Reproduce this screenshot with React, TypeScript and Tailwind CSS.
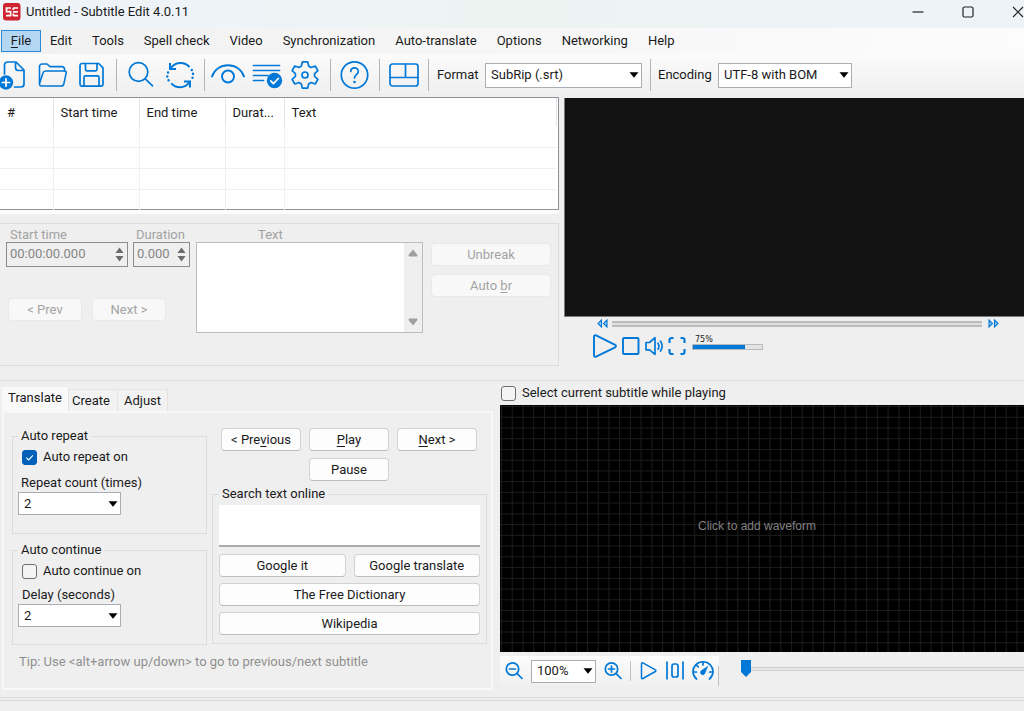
import React from "react";

const blue = "#0078d7";

function Icon({ w, h, sw = 1.7, children }: { w: number; h: number; sw?: number; children: React.ReactNode }) {
  return (
    <svg
      width={w}
      height={h}
      viewBox={`0 0 ${w} ${h}`}
      fill="none"
      stroke={blue}
      strokeWidth={sw}
      strokeLinecap="round"
      strokeLinejoin="round"
      className="block shrink-0"
      aria-hidden="true"
    >
      {children}
    </svg>
  );
}

const NewIcon = () => (
  <Icon w={28} h={32}>
    <path d="M4.500 15V6a3 3 0 0 1 3-3H16l8 8v14a3 3 0 0 1-3 3h-6.500M15.500 3v5.500a3 3 0 0 0 3 3H24" />
    <circle cx="6" cy="23.500" r="7.200" fill={blue} stroke="none" />
    <path d="M6 19.800v7.400M2.300 23.500h7.400" stroke="#fff" />
  </Icon>
);

const FolderIcon = () => (
  <Icon w={30} h={32} sw={1.6}>
    <path d="M1.500 24V7.500A2.500 2.500 0 0 1 4 5h5l3 2.600h12a2.500 2.500 0 0 1 2.500 2.500V12" />
    <path d="M7.500 12h19.200a1.500 1.500 0 0 1 1.500 1.900l-2.300 10.800a3 3 0 0 1-2.900 2.300H3.500a2 2 0 0 1-2-2.500L5 14a2.600 2.600 0 0 1 2.500-2Z" />
  </Icon>
);

const SaveIcon = () => (
  <Icon w={28} h={32}>
    <path d="M4.200 4.500h16.500l4.300 4.300V25a2.200 2.200 0 0 1-2.200 2.200H4.200A2.200 2.200 0 0 1 2 25V6.700A2.200 2.200 0 0 1 4.200 4.500Z" />
    <path d="M7.500 4.500v6a1.300 1.300 0 0 0 1.300 1.300h8.900a1.300 1.300 0 0 0 1.300-1.300v-6M6 27v-8.700a1.500 1.500 0 0 1 1.500-1.500h12a1.500 1.500 0 0 1 1.500 1.500V27" />
  </Icon>
);

const SearchIcon = () => (
  <Icon w={28} h={32}>
    <circle cx="11.500" cy="13" r="9.300" />
    <path d="m18.300 19.800 7.200 7" />
  </Icon>
);

const ReplaceIcon = () => (
  <Icon w={30} h={32} sw={2}>
    <path d="M5.500 9.500C8 6 11.500 4 15.500 4c4 0 7 1.700 9 4M5 4v6h6" strokeLinecap="butt" strokeLinejoin="miter" />
    <path d="M24.500 23c-2 3.200-5.500 5.200-9.500 5.200-3.600 0-6.600-1.500-8.700-3.900M25 28.500v-6h-6" strokeLinecap="butt" strokeLinejoin="miter" />
    <path d="M3 13.500v.1M2.300 17.500v.1M3.600 21.300v.1M26.800 11v.1M28 14.800v.1M27.500 18.700v.1" strokeWidth="2.400" />
  </Icon>
);

const EyeIcon = () => (
  <Icon w={34} h={32} sw={1.9}>
    <path d="M1 17.500C3.500 10.500 9.700 6.300 17 6.300S30.500 10.500 33 17.500" />
    <circle cx="17" cy="17.500" r="6" />
  </Icon>
);

const SpellIcon = () => (
  <Icon w={32} h={32}>
    <path d="M2.500 6.500h26M2.500 11.500h26M2.500 16.500H17M2.500 21.500h10" />
    <circle cx="23.500" cy="21.500" r="7.700" fill={blue} stroke="none" />
    <path d="m19.700 21.800 2.700 2.800 5-5.300" stroke="#fff" />
  </Icon>
);

const GearIcon = () => (
  <Icon w={32} h={32}>
    <path d="M13.300 2.800h5.400l.9 4.300 2.400 1.400 4.200-1.500 2.700 4.700-3.300 2.900v2.800l3.300 2.900-2.700 4.700-4.200-1.500-2.400 1.400-.9 4.300h-5.400l-.9-4.300-2.400-1.400L5.800 25l-2.700-4.700 3.300-2.900v-2.800l-3.300-2.900L5.800 7 10 8.500l2.400-1.400Z" />
    <circle cx="16" cy="16" r="3" />
  </Icon>
);

const HelpIcon = () => (
  <Icon w={30} h={32}>
    <circle cx="14.500" cy="16" r="13.200" />
    <path d="M10.800 12.500c0-2.300 1.600-3.700 3.700-3.700s3.800 1.500 3.800 3.600c0 3.200-3.800 3.300-3.800 6.600" />
    <circle cx="14.500" cy="23" r="1.300" fill={blue} stroke="none" />
  </Icon>
);

const LayoutIcon = () => (
  <Icon w={30} h={32}>
    <rect x="1" y="5" width="28" height="22" rx="2.500" />
    <path d="M1 18.500h28M16.500 5v13.500" />
  </Icon>
);

function ToolButton({ label, children }: { label: string; children: React.ReactNode }) {
  return (
    <button type="button" aria-label={label} title={label} className="block shrink-0">
      {children}
    </button>
  );
}

function Separator() {
  return <div className="h-8 w-px shrink-0 bg-[#b4b4b4]" />;
}

function Combo({ id, value, className }: { id: string; value: string; className: string }) {
  return (
    <div className={`relative shrink-0 ${className}`}>
      <select
        id={id}
        aria-label={id}
        defaultValue={value}
        className="block size-full appearance-none rounded-none border border-[#acacb4] bg-white pl-[5px] text-[#1a1a1a]"
      >
        <option>{value}</option>
      </select>
      <svg width="10" height="6" viewBox="0 0 10 6" className="pointer-events-none absolute top-1/2 right-[3px] -translate-y-1/2">
        <path d="M0.500 0.300h9L5 5.700Z" fill="#000" />
      </svg>
    </div>
  );
}

function Btn({ children, disabled = false, className = "" }: { children: React.ReactNode; disabled?: boolean; className?: string }) {
  return (
    <button
      type="button"
      disabled={disabled}
      className={`flex h-[23px] items-center justify-center rounded-[4px] border border-[#d2d2d2] border-b-[#bdbdbd] bg-[#fdfdfd] whitespace-nowrap disabled:border-[#e9e9e9] disabled:bg-[#f8f8f8] disabled:text-[#a3a3a3] ${className}`}
    >
      {children}
    </button>
  );
}

function Check({ id, label, checked = false }: { id: string; label: string; checked?: boolean }) {
  return (
    <label htmlFor={id} className="flex items-center gap-1.5 whitespace-nowrap">
      <span className="relative block size-[15px]">
        <input
          id={id}
          type="checkbox"
          defaultChecked={checked}
          className="peer block size-[15px] appearance-none rounded-[3px] border border-[#6e6e6e] bg-[#f4f4f4] checked:border-[#005fb8] checked:bg-[#005fb8]"
        />
        <svg viewBox="0 0 14 14" className="pointer-events-none absolute inset-0 hidden peer-checked:block" fill="none" stroke="#fff" strokeWidth="1">
          <path d="m4 7.200 2.200 2.100L10.200 5" />
        </svg>
      </span>
      {label}
    </label>
  );
}

function TimeBox({ id, value }: { id: string; value: string }) {
  return (
    <div className="flex h-[25px] w-full items-center justify-between border border-[#8c8c8c] pr-[3px] pl-[3px]">
      <input id={id} disabled defaultValue={value} className="w-0 min-w-0 flex-1 bg-transparent pb-0.5 text-[#858585]" />
      <svg width="9" height="15" viewBox="0 0 9 15" fill="#6b6b6b" className="shrink-0">
        <path d="M4.500 0.500 8.500 6h-8ZM4.500 14.500 8.500 9h-8Z" />
      </svg>
    </div>
  );
}

const menus = ["Edit", "Tools", "Spell check", "Video", "Synchronization", "Auto-translate", "Options", "Networking", "Help"];

function TitleBar() {
  return (
    <header className="flex h-7 shrink-0 items-center bg-linear-to-r from-[#eff3fa] via-[#ecf4f2] to-[#eef3f8] pb-1 pl-[3px]">
      <svg width="18" height="18" viewBox="0 0 18 18" className="shrink-0">
        <rect width="17.500" height="17.500" rx="3" fill="#cf2530" />
        <path d="M8 5H3.500v3.700H7.600v4H3M15 5h-4.800M10 8.800h4.800M15 12.700h-4.800M10.300 5v2M10.300 10.500v2.200" fill="none" stroke="#fff" strokeWidth="1.700" />
      </svg>
      <h1 className="ml-1 flex-1 pl-px text-[#1a1a1a]">Untitled - Subtitle Edit 4.0.11</h1>
      <div className="flex items-center gap-[38px]">
        {[
          ["Minimize", "M0.500 6h11"],
          ["Maximize", "M2.500 1h7a1.500 1.500 0 0 1 1.500 1.500v7a1.500 1.500 0 0 1-1.500 1.500h-7A1.500 1.500 0 0 1 1 9.500v-7A1.500 1.500 0 0 1 2.500 1Z"],
          ["Close", "m1 1 10 10M11 1 1 11"],
        ].map(([name, d]) => (
          <button key={name} type="button" aria-label={name}>
            <svg width="12" height="12" viewBox="0 0 12 12" fill="none" stroke="#222" strokeWidth="1.200">
              <path d={d} />
            </svg>
          </button>
        ))}
      </div>
    </header>
  );
}

function MenuBar() {
  return (
    <nav className="flex h-[26px] shrink-0 items-center bg-linear-to-r from-[#f1f1f1] to-[#fcfcfc] pl-px">
      <button type="button" className="h-[22px] w-10 border border-[#2a8ad8] bg-[#b3d7f3]">
        <span className="underline underline-offset-2">F</span>ile
      </button>
      <div className="flex items-center gap-5 pl-[9px]">
        {menus.map((m) => (
          <button key={m} type="button" className="whitespace-nowrap">
            {m}
          </button>
        ))}
      </div>
    </nav>
  );
}

function ToolBar() {
  return (
    <div className="flex h-[43px] shrink-0 items-center gap-[9px] bg-linear-to-b from-[#fbfbfb] to-[#efefef] pb-px">
      <div className="flex items-center gap-2.5">
        <ToolButton label="New"><NewIcon /></ToolButton>
        <ToolButton label="Open"><FolderIcon /></ToolButton>
        <ToolButton label="Save"><SaveIcon /></ToolButton>
        <Separator />
        <ToolButton label="Find"><SearchIcon /></ToolButton>
        <ToolButton label="Replace"><ReplaceIcon /></ToolButton>
      </div>
      <div className="flex items-center gap-1.5">
        <Separator />
        <ToolButton label="Visual sync"><EyeIcon /></ToolButton>
        <ToolButton label="Spell check"><SpellIcon /></ToolButton>
        <ToolButton label="Settings"><GearIcon /></ToolButton>
      </div>
      <Separator />
      <ToolButton label="Help"><HelpIcon /></ToolButton>
      <Separator />
      <ToolButton label="Choose layout"><LayoutIcon /></ToolButton>
      <div className="flex items-center gap-2">
        <Separator />
        <label htmlFor="Format" className="w-10">Format</label>
        <Combo id="Format" value="SubRip (.srt)" className="h-[25px] w-[157px]" />
      </div>
      <div className="-ml-px flex items-center gap-[7px]">
        <Separator />
        <label htmlFor="Encoding" className="w-[53px]">Encoding</label>
        <Combo id="Encoding" value="UTF-8 with BOM" className="h-[25px] w-[134px]" />
      </div>
    </div>
  );
}

function SubtitleList() {
  const heads = ["#", "Start time", "End time", "Durat...", "Text"];
  return (
    <div className="h-[113px] border-y border-r border-[#8f939c] bg-white pr-px">
      <table className="w-full table-fixed border-collapse">
        <colgroup>
          <col className="w-[53px]" />
          <col className="w-[86px]" />
          <col className="w-[86px]" />
          <col className="w-[59px]" />
          <col />
        </colgroup>
        <thead>
          <tr className="h-7">
            {heads.map((h) => (
              <th key={h} scope="col" className="border-r border-[#e4e4e4] pt-0.5 pl-[7px] text-left font-normal whitespace-nowrap">
                {h}
              </th>
            ))}
          </tr>
        </thead>
        <tbody>
          {[0, 1, 2, 3].map((r) => (
            <tr key={r} className="h-[21px] border-b border-[#f0f0f0] last:border-b-0">
              {heads.map((h) => (
                <td key={h} className="border-r border-[#f0f0f0] last:border-r-0" />
              ))}
            </tr>
          ))}
        </tbody>
      </table>
    </div>
  );
}

function EditPanel() {
  return (
    <section className="flex h-[143px] border-y border-r border-[#dcdcdc] pt-px pr-[7px] pl-1.5 text-[#a3a3a3]">
      <div className="w-[190px] shrink-0">
        <div className="flex gap-[5px]">
          <div className="w-[122px]">
            <label htmlFor="start" className="block h-[17px] pt-px pl-1">Start time</label>
            <TimeBox id="start" value="00:00:00.000" />
          </div>
          <div className="w-[57px]">
            <label htmlFor="duration" className="block h-[17px] pt-px pl-[3px]">Duration</label>
            <TimeBox id="duration" value="0.000" />
          </div>
        </div>
        <div className="flex gap-2.5 pt-[31px] pl-0.5">
          <Btn disabled className="w-[74px]">&lt; Prev</Btn>
          <Btn disabled className="w-[74px]">Next &gt;</Btn>
        </div>
      </div>
      <div className="flex min-w-0 flex-1 flex-col">
        <label htmlFor="text" className="h-[17px] pt-px pl-[62px]">Text</label>
        <div className="flex h-[91px] border border-[#bdbdbd] bg-white">
          <textarea id="text" disabled className="min-w-0 flex-1 resize-none" />
          <div className="flex w-[18px] flex-col items-center justify-between bg-[#efefef] py-1.5">
            <svg width="10" height="8" viewBox="0 0 10 8" fill="#a0a0a0"><path d="M5 .5 9.500 6 9 7.500H1L.5 6Z" /></svg>
            <svg width="10" height="8" viewBox="0 0 10 8" fill="#a0a0a0"><path d="M5 7.500 9.500 2 9 .5H1L.5 2Z" /></svg>
          </div>
        </div>
      </div>
      <div className="flex w-32 shrink-0 flex-col gap-2 pt-[18px] pl-2">
        <Btn disabled>Unbreak</Btn>
        <Btn disabled>
          <span>Auto <span className="underline underline-offset-2">b</span>r</span>
        </Btn>
      </div>
    </section>
  );
}

function VideoPanel() {
  return (
    <section className="min-w-0 pt-px">
      <div className="h-[219px] border-b border-l border-[#7a7a7a] bg-[#121212]" />
      <div className="flex h-[13px] items-center gap-1 pr-[25px] pl-[33px]">
        <button type="button" aria-label="Rewind">
          <svg width="11" height="9" viewBox="0 0 11 9" fill="#9fcdf2" stroke={blue} strokeWidth="1.100"><path d="M4.500 1v7L1 4.500ZM10 1v7L6.500 4.500Z" /></svg>
        </button>
        <input
          type="range"
          aria-label="Position"
          defaultValue={0}
          className="h-[6px] min-w-0 flex-1 appearance-none border-y-2 border-[#bcbcbc] bg-[#dedede] [&::-webkit-slider-thumb]:size-0 [&::-webkit-slider-thumb]:appearance-none"
        />
        <button type="button" aria-label="Fast forward" className="pl-0.5">
          <svg width="11" height="9" viewBox="0 0 11 9" fill="#9fcdf2" stroke={blue} strokeWidth="1.100"><path d="M1 1v7l3.500-3.500ZM6.500 1v7L10 4.500Z" /></svg>
        </button>
      </div>
      <div className="flex h-8 items-center gap-1 pl-7">
        <ToolButton label="Play">
          <Icon w={25} h={26} sw={1.9}><path d="M2 3.500v19a1.400 1.400 0 0 0 2.100 1.200l19-9.300a1.400 1.400 0 0 0 0-2.600l-19-9.400A1.400 1.400 0 0 0 2 3.500Z" /></Icon>
        </ToolButton>
        <ToolButton label="Stop">
          <Icon w={19} h={20} sw={1.9}><rect x="2" y="2" width="15.500" height="16" rx="1" /></Icon>
        </ToolButton>
        <ToolButton label="Mute">
          <Icon w={20} h={20}><path d="M2 6.500h3.500L11 1.700v16.600L5.500 13.800H2ZM14 7.200q1.800 3 0 6M16.500 5.200q3.300 4.800 0 9.800" /></Icon>
        </ToolButton>
        <ToolButton label="Fullscreen">
          <Icon w={18} h={20} sw={2.1}><path d="M1.500 7V4a2 2 0 0 1 2-2h2M12.500 2h2a2 2 0 0 1 2 2v3M16.500 13v3a2 2 0 0 1-2 2h-2M5.500 18h-2a2 2 0 0 1-2-2v-3" strokeLinecap="butt" /></Icon>
        </ToolButton>
        <div className="flex flex-col pb-2 pl-0.5">
          <label htmlFor="volume" className="pl-[3px] font-['DejaVu_Sans'] text-[8px] leading-[9px]">75%</label>
          <input
            id="volume"
            type="range"
            defaultValue={75}
            className="block h-[6px] w-[71px] appearance-none border border-[#b9b9b9] bg-linear-to-r from-[#0078d7] from-75% to-[#e4e4e4] to-75% [&::-webkit-slider-thumb]:size-0 [&::-webkit-slider-thumb]:appearance-none"
          />
        </div>
      </div>
    </section>
  );
}

function Legend({ children }: { children: React.ReactNode }) {
  return <legend className="h-[18px] px-[3px] leading-[17px]">{children}</legend>;
}

function TranslatePanel() {
  return (
    <section className="min-w-0 pt-1.5 pr-[7px] pl-0.5">
      <div className="flex h-6 items-end" role="tablist">
        <button type="button" role="tab" aria-selected="true" className="h-6 w-[66px] bg-[#f9f9f9] pb-0.5">Translate</button>
        <button type="button" role="tab" aria-selected="false" className="h-[22px] w-[50px] border border-b-0 border-[#e4e4e4] bg-[#f2f2f2] pr-1">Create</button>
        <button type="button" role="tab" aria-selected="false" className="h-[22px] w-[50px] border border-b-0 border-l-0 border-[#e4e4e4] bg-[#f2f2f2]">Adjust</button>
      </div>
      <div className="h-[279px] border-2 border-[#f8f8f8] bg-[#efefef] pt-3.5 pr-1 pl-2">
        <div className="flex gap-[5px]">
          <div className="flex w-[195px] shrink-0 flex-col gap-[7px]">
            <fieldset className="h-[107px] border border-[#dcdcdc] pl-[5px]">
              <Legend>Auto repeat</Legend>
              <div className="pt-[3px] pl-1"><Check id="repeat" label="Auto repeat on" checked /></div>
              <label htmlFor="Repeat count" className="block pt-2 pl-[3px]">Repeat count (times)</label>
              <Combo id="Repeat count" value="2" className="h-[23px] w-[103px]" />
            </fieldset>
            <fieldset className="h-[104px] border border-[#dcdcdc] pl-[5px]">
              <Legend>Auto continue</Legend>
              <div className="pt-[3px] pl-1"><Check id="continue" label="Auto continue on" /></div>
              <label htmlFor="Delay" className="block pt-1.5 pl-1">Delay (seconds)</label>
              <Combo id="Delay" value="2" className="h-[23px] w-[103px]" />
            </fieldset>
          </div>
          <div className="min-w-0 flex-1 pt-px">
            <div className="grid grid-cols-3 gap-x-2 gap-y-[7px] pr-2.5 pl-[9px]">
              <Btn><span>&lt; Pre<span className="underline underline-offset-2">v</span>ious</span></Btn>
              <Btn><span><span className="underline underline-offset-2">P</span>lay</span></Btn>
              <Btn><span><span className="underline underline-offset-2">N</span>ext &gt;</span></Btn>
              <Btn className="col-start-2">Pause</Btn>
            </div>
            <fieldset className="mt-1 flex flex-col border border-[#dcdcdc] px-1.5 pb-2">
              <Legend>Search text online</Legend>
              <textarea aria-label="Search text online" className="mt-0.5 block h-[42px] w-full resize-none border-b-2 border-[#acacac] bg-white" />
              <div className="flex flex-col gap-1.5 pt-[7px]">
                <div className="grid grid-cols-2 gap-2">
                  <Btn>Google it</Btn>
                  <Btn>Google translate</Btn>
                </div>
                <Btn>The Free Dictionary</Btn>
                <Btn>Wikipedia</Btn>
              </div>
            </fieldset>
          </div>
        </div>
        <p className="pt-2 pl-[7px] whitespace-nowrap text-[#8f8f8f]">Tip: Use &lt;alt+arrow up/down&gt; to go to previous/next subtitle</p>
      </div>
    </section>
  );
}

function WaveformPanel() {
  return (
    <section className="min-w-0">
      <div className="flex h-6 items-center pl-px">
        <Check id="select-current" label="Select current subtitle while playing" />
      </div>
      <div className="relative h-[247px] bg-black">
        <svg className="absolute inset-0 size-full" aria-hidden="true">
          <defs>
            <pattern id="grid" width="10.740" height="10.740" patternUnits="userSpaceOnUse">
              <path d="M1.500 0v10.740M0 1.500h10.740" stroke="#1c1c1a" strokeWidth="1" />
            </pattern>
          </defs>
          <rect width="100%" height="100%" fill="url(#grid)" />
        </svg>
        <button type="button" className="relative flex size-full items-center justify-center pr-2.5 pb-1.5 font-['Liberation_Sans'] text-[12px] text-[#808080]">
          Click to add waveform
        </button>
      </div>
      <div className="mt-1 flex h-[30px] items-center">
        <div className="flex h-[30px] shrink-0 items-center gap-2 bg-linear-to-b from-[#fcfcfc] to-[#f0f0f0] pl-[5px]">
          <ToolButton label="Zoom out">
            <Icon w={18} h={20}><circle cx="7.500" cy="8" r="6.200" /><path d="m12.200 12.700 4.800 4.800M4.500 8h6" /></Icon>
          </ToolButton>
          <Combo id="Zoom" value="100%" className="h-[23px] w-[65px]" />
          <ToolButton label="Zoom in">
            <Icon w={18} h={20}><circle cx="7.500" cy="8" r="6.200" /><path d="m12.200 12.700 4.800 4.800M4.500 8h6M7.500 5v6" /></Icon>
          </ToolButton>
          <div className="h-5 w-px bg-[#c0c0c0]" />
          <ToolButton label="Play selection">
            <Icon w={19} h={20} sw={1.5}><path d="M2.500 2.700v14a.9.900 0 0 0 1.400.8l12.500-7a.9.900 0 0 0 0-1.600l-12.500-7A.9.900 0 0 0 2.500 2.700Z" /></Icon>
          </ToolButton>
          <ToolButton label="Center on position">
            <Icon w={18} h={20}><path d="M1 0.500v18M17 0.500v18" strokeLinecap="butt" /><rect x="6" y="3" width="6" height="13" rx="2" /></Icon>
          </ToolButton>
          <ToolButton label="Playback speed">
            <Icon w={22} h={22}><path d="M4.500 19A10 9.800 0 1 1 17.500 19M11 2v3M4.500 5l1.800 1.800M1.500 12h3M20.500 12h-3" /><path d="M15.500 6.500 9.500 10.500a2.300 2.300 0 1 0 3.200 3.200Z" fill={blue} strokeWidth=".6" /></Icon>
          </ToolButton>
          <div className="-ml-1 h-5 w-px self-end bg-[#c0c0c0]" />
        </div>
        <input
          type="range"
          aria-label="Waveform position"
          defaultValue={0}
          className="mb-1 ml-[22px] h-[18px] min-w-0 flex-1 appearance-none bg-transparent [&::-webkit-slider-runnable-track]:h-[4px] [&::-webkit-slider-runnable-track]:border-y [&::-webkit-slider-runnable-track]:border-[#cfcfcf] [&::-webkit-slider-runnable-track]:bg-[#e6e8e8] [&::-webkit-slider-thumb]:-mt-2 [&::-webkit-slider-thumb]:h-[17px] [&::-webkit-slider-thumb]:w-[10px] [&::-webkit-slider-thumb]:appearance-none [&::-webkit-slider-thumb]:bg-[#0078d7] [&::-webkit-slider-thumb]:[clip-path:polygon(0_0,100%_0,100%_70%,50%_100%,0_70%)]"
        />
      </div>
    </section>
  );
}

export default function App() {
  return (
    <div className="flex min-h-screen flex-col overflow-hidden bg-[#efefef] font-['Roboto','Noto_Sans',sans-serif] text-[13px] leading-[18px] text-[#1a1a1a]">
      <TitleBar />
      <MenuBar />
      <ToolBar />
      <main className="flex flex-col">
        <div className="grid grid-cols-[559fr_460fr] gap-x-[5px]">
          <div className="min-w-0 pb-3.5">
            <SubtitleList />
            <div className="mb-[9px] h-1 bg-[#fcfcfc]" />
            <EditPanel />
          </div>
          <VideoPanel />
        </div>
        <div className="grid grid-cols-[500fr_524fr] border-t border-[#dcdcdc]">
          <TranslatePanel />
          <WaveformPanel />
        </div>
      </main>
      <footer className="mt-[7px] h-1 border-y border-[#d8d8d8]" />
    </div>
  );
}
